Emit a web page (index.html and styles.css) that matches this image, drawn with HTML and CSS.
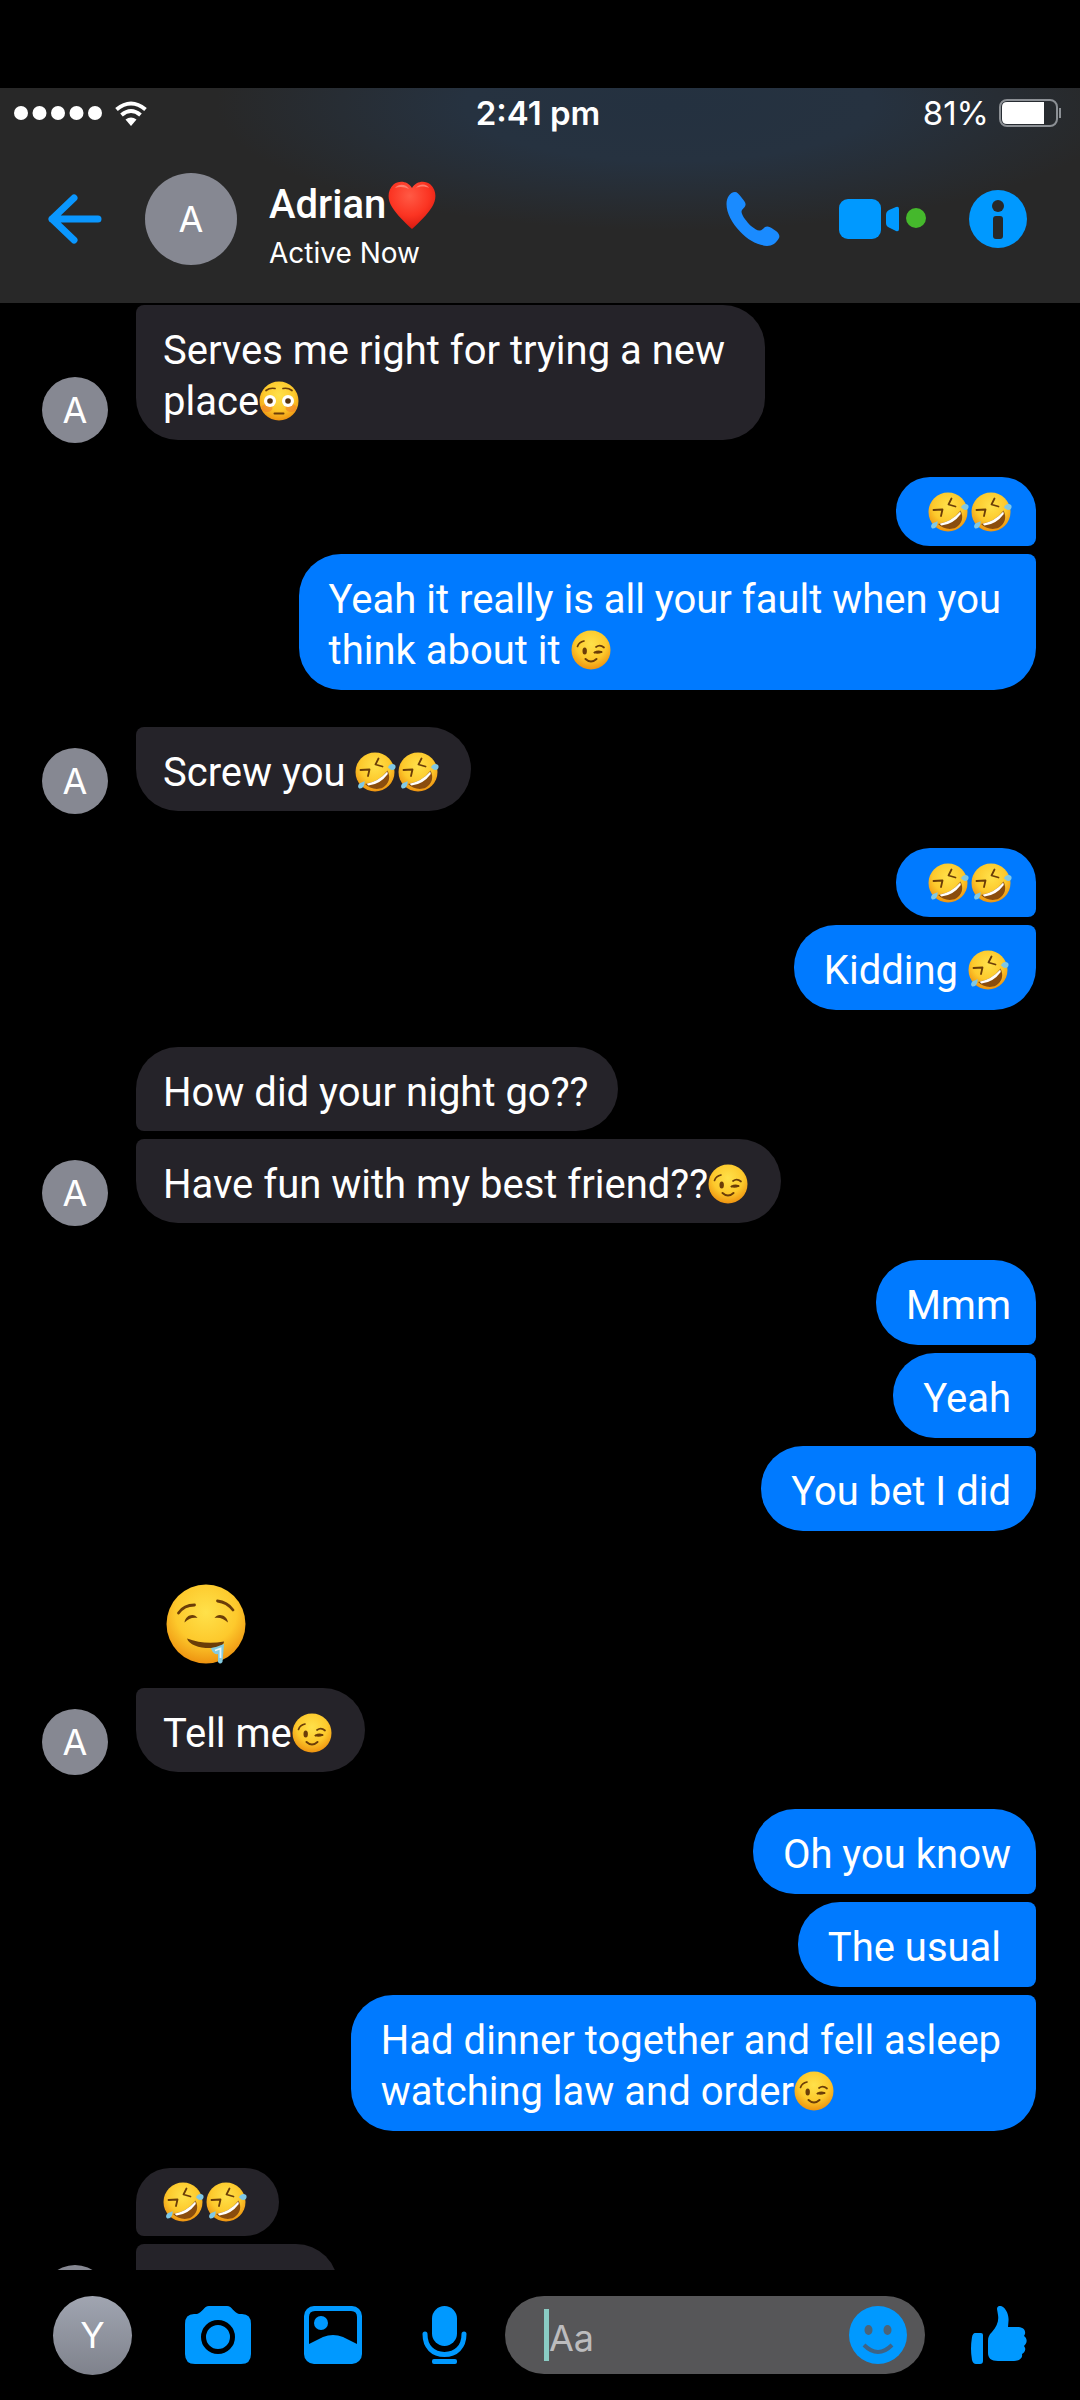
FILE: index.html
```html
<!DOCTYPE html>
<html lang="en">
<head>
    <meta charset="UTF-8">
    <meta name="viewport" content="width=device-width, initial-scale=1.0">
    <title>Adrian</title>
    <link rel="stylesheet" href="styles.css">
</head>
<body>
    <!-- Shared emoji drawings -->
    <svg class="sprites" width="0" height="0" aria-hidden="true">
        <defs>
            <radialGradient id="face" cx="0.5" cy="0.35" r="0.65">
                <stop offset="0" stop-color="#ffe14a"/>
                <stop offset="0.6" stop-color="#fdc92c"/>
                <stop offset="1" stop-color="#ee9310"/>
            </radialGradient>
            <radialGradient id="heartFill" cx="0.45" cy="0.3" r="0.7">
                <stop offset="0" stop-color="#ff5a45"/>
                <stop offset="0.6" stop-color="#fb3422"/>
                <stop offset="1" stop-color="#d81a10"/>
            </radialGradient>
        </defs>
        <symbol id="rofl" viewBox="0 0 43 40">
            <circle cx="20" cy="20" r="19.5" fill="url(#face)"/>
            <g fill="none" stroke="#6b3d08" stroke-width="1.8" stroke-linecap="round" stroke-linejoin="round">
                <path d="M5.5 18 14.5 17.5 13 24"/>
                <path d="M23.5 6.5 20.5 12.5 27.5 14.5"/>
            </g>
            <path d="M10 32Q24 30 32.500 18.500C36 25 34 32 28 35.500C22 38.500 14 36.500 10 32z" fill="#8a4d0e"/>
            <path d="M11.500 31.700Q23.500 29.500 32.300 19.500L32.800 22Q25 32.500 13.500 33.500z" fill="#fff"/>
            <path d="M33 15.500C34 12 38 11 40 13C41.500 15 40 18 37.500 18C35.500 18 34.500 16.500 33 15.500z" fill="#7fc8e6"/>
            <path d="M9.500 29C10 33 8 36.500 5 36.500C3 36.500 2.500 34 4 32C5.500 30.500 7.500 30.500 9.500 29z" fill="#7fc8e6"/>
        </symbol>
        <symbol id="wink" viewBox="0 0 43 40">
            <circle cx="20" cy="20" r="19.5" fill="url(#face)"/>
            <ellipse cx="13.700" cy="21" rx="2.200" ry="3.500" fill="#6b3d08"/>
            <g fill="none" stroke="#6b3d08" stroke-width="1.700" stroke-linecap="round">
                <path d="M6.500 16.500Q8 12 13 11"/>
                <path d="M25 17Q29 14 33 17.500"/>
                <path d="M23.500 22.500Q27 20.500 30.500 22"/>
                <path d="M23.500 22.500Q27 23.500 30.500 22"/>
                <path d="M14.500 29Q20 34 25.500 29" stroke-width="2"/>
            </g>
        </symbol>
        <symbol id="flushed" viewBox="0 0 43 40">
            <circle cx="20" cy="20" r="19.5" fill="url(#face)"/>
            <ellipse cx="8" cy="27" rx="5.500" ry="4" fill="#f0802a" opacity="0.6"/>
            <ellipse cx="32" cy="27" rx="5.500" ry="4" fill="#f0802a" opacity="0.6"/>
            <circle cx="11" cy="20" r="6" fill="#fff"/>
            <circle cx="29" cy="20" r="6" fill="#fff"/>
            <circle cx="11" cy="20" r="2.800" fill="#553311"/>
            <circle cx="29" cy="20" r="2.800" fill="#553311"/>
            <g fill="none" stroke="#6b3d08" stroke-width="1.700" stroke-linecap="round">
                <path d="M7 9.500Q11 6.500 16 7.500"/>
                <path d="M24 7.500Q29 6.500 33 9.500"/>
                <path d="M15.500 32.500H24.500" stroke-width="2"/>
            </g>
        </symbol>
        <symbol id="drool" viewBox="0 0 80 80">
            <circle cx="40" cy="40" r="39.500" fill="url(#face)"/>
            <g fill="none" stroke="#6b3d08" stroke-width="2.800" stroke-linecap="round">
                <path d="M12.500 29Q18 21 28.500 21"/>
                <path d="M51.500 17Q61 18 67 26"/>
            </g>
            <path d="M18.500 38.500C19.500 31 28 28.500 31.500 34C26 33 22.500 35 18.500 38.500z" fill="#6b3d08"/>
            <path d="M48.500 34C52 28.500 61 31 62 38.500C57.500 35 54 33 48.500 34z" fill="#6b3d08"/>
            <path d="M21 54.500Q38 61 58 57.500C58 61 53 64 46 64C34 64.500 23 61 21 54.500z" fill="#6b3d08"/>
            <path d="M45 64Q51 63 58 60L56.500 78Q54 81 52 78L52 70Q47 71 45 64z" fill="#84cbe0"/>
            <path d="M49 66.500 54.500 64.500V74" fill="none" stroke="#e6f7fc" stroke-width="1.800"/>
        </symbol>
        <symbol id="heart" viewBox="0 0 48 48">
            <path d="M24 7C28 0 37-1 42.500 3.500C48.500 9 49 18 44 26C39 34 30.500 42 24 48C17.500 42 9 34 4 26C-1 18-.5 9 5.500 3.500C11-1 20 0 24 7z" fill="url(#heartFill)"/>
            <path d="M7 7C11 2 18 3 21 8C17 6 12 5 7 7zM28 7C32 2 39 3 41 7C37 5 32 5 28 7z" fill="#ff9a8c" opacity="0.7"/>
        </symbol>
    </svg>

    <header class="header">
        <div class="status-bar">
            <div class="signal">
                <svg width="89" height="14" viewBox="0 0 89 14" fill="#fff" role="img" aria-label="Signal">
                    <circle cx="7" cy="7" r="7"/><circle cx="25.500" cy="7" r="7"/><circle cx="44" cy="7" r="7"/><circle cx="62.500" cy="7" r="7"/><circle cx="81" cy="7" r="7"/>
                </svg>
                <svg width="32" height="25" viewBox="0 0 32 25" fill="none" stroke="#fff" stroke-width="4" role="img" aria-label="Wi-Fi">
                    <path d="M1.500 8.500Q16-3.500 30.500 8.500"/>
                    <path d="M6.500 14Q16 6 25.500 14"/>
                    <path d="M10.500 18.500Q16 14.500 21.500 18.500L16 25z" fill="#fff" stroke="none"/>
                </svg>
            </div>
            <time class="clock">2:41 pm</time>
            <div class="battery">
                <span>81%</span>
                <svg width="63" height="28" viewBox="0 0 63 28" role="img" aria-label="Battery">
                    <rect x="1" y="1" width="57" height="26" rx="7" fill="none" stroke="#8c9095" stroke-width="2"/>
                    <path d="M8 3H45V25H8Q3 25 3 20V8Q3 3 8 3z" fill="#fff"/>
                    <path d="M61 9V19" stroke="#8c9095" stroke-width="2"/>
                </svg>
            </div>
        </div>

        <div class="chat-bar">
            <a href="#" class="back" aria-label="Back">
                <svg width="54" height="50" viewBox="0 0 54 50" fill="none" stroke="#0a97ff" stroke-width="7" stroke-linecap="round" stroke-linejoin="round">
                    <path d="M26 4 4 25 26 46M4 25H50"/>
                </svg>
            </a>
            <div class="avatar avatar-large">A</div>
            <div class="contact">
                <h1>Adrian<svg class="heart" role="img" aria-label="❤️"><use href="#heart"/></svg></h1>
                <p>Active Now</p>
            </div>
            <div class="actions">
                <button class="call" aria-label="Call">
                    <svg width="54" height="54" viewBox="0 0 54 54" fill="#1a8bff">
                        <path d="M9 0C11 0 13 2 15.500 5.500C18 8.500 20 11 19.500 13C19 16 15.500 17 15.500 20C16 24 21 30 25 34C29 37 31.500 39 34 38.500C37 38 38 34.500 41.500 34.500C44 34.500 47 37 50 39C53 41.500 54 43.500 53 46C50.500 51 46 54 41 54C31 53 22 48 14 39.500C6 31 .5 21 .5 12C.5 6 4 0 9 0z"/>
                    </svg>
                </button>
                <button aria-label="Video call">
                    <svg width="87" height="40" viewBox="0 0 87 40">
                        <rect width="42" height="40" rx="9" fill="#0099ff"/>
                        <path d="M47 16Q47 12.500 50 11L57 8Q60 7 60 10V30Q60 33 57 32L50 28.500Q47 27 47 24z" fill="#0099ff"/>
                        <circle cx="77" cy="19" r="10" fill="#45b82c"/>
                    </svg>
                </button>
                <button aria-label="Conversation info">
                    <svg width="58" height="58" viewBox="0 0 58 58">
                        <circle cx="29" cy="29" r="29" fill="#0099ff"/>
                        <circle cx="29" cy="16" r="6" fill="#282828"/>
                        <rect x="24" y="26" width="10" height="23" rx="3" fill="#282828"/>
                    </svg>
                </button>
            </div>
        </div>
    </header>

    <main class="messages">
        <section class="group incoming">
            <div class="avatar">A</div>
            <p class="bubble last">Serves me right for trying a new&nbsp;<br>place<svg class="emoji" role="img" aria-label="😳"><use href="#flushed"/></svg></p>
        </section>

        <section class="group outgoing">
            <p class="bubble first emoji-only"><svg class="emoji" role="img" aria-label="🤣"><use href="#rofl"/></svg><svg class="emoji" role="img" aria-label="🤣"><use href="#rofl"/></svg></p>
            <p class="bubble last">Yeah it really is all your fault when you&nbsp;<br>think about it <svg class="emoji" role="img" aria-label="😉"><use href="#wink"/></svg></p>
        </section>

        <section class="group incoming">
            <div class="avatar">A</div>
            <p class="bubble last">Screw you <svg class="emoji" role="img" aria-label="🤣"><use href="#rofl"/></svg><svg class="emoji" role="img" aria-label="🤣"><use href="#rofl"/></svg></p>
        </section>

        <section class="group outgoing">
            <p class="bubble first emoji-only"><svg class="emoji" role="img" aria-label="🤣"><use href="#rofl"/></svg><svg class="emoji" role="img" aria-label="🤣"><use href="#rofl"/></svg></p>
            <p class="bubble last">Kidding <svg class="emoji" role="img" aria-label="🤣"><use href="#rofl"/></svg></p>
        </section>

        <section class="group incoming">
            <div class="avatar">A</div>
            <p class="bubble first">How did your night go??</p>
            <p class="bubble last">Have fun with my best friend??<svg class="emoji" role="img" aria-label="😉"><use href="#wink"/></svg></p>
        </section>

        <section class="group outgoing">
            <p class="bubble first">Mmm</p>
            <p class="bubble middle">Yeah</p>
            <p class="bubble last">You bet I did</p>
        </section>

        <section class="group incoming">
            <div class="avatar">A</div>
            <p class="big-emoji"><svg width="80" height="80" role="img" aria-label="🤤"><use href="#drool"/></svg></p>
            <p class="bubble last">Tell me<svg class="emoji" role="img" aria-label="😉"><use href="#wink"/></svg></p>
        </section>

        <section class="group outgoing">
            <p class="bubble first">Oh you know</p>
            <p class="bubble middle">The usual&nbsp;</p>
            <p class="bubble last">Had dinner together and fell asleep&nbsp;<br>watching law and order<svg class="emoji" role="img" aria-label="😉"><use href="#wink"/></svg></p>
        </section>

        <section class="group incoming">
            <div class="avatar"></div>
            <p class="bubble first emoji-only"><svg class="emoji" role="img" aria-label="🤣"><use href="#rofl"/></svg><svg class="emoji" role="img" aria-label="🤣"><use href="#rofl"/></svg></p>
            <p class="bubble last cut-off"></p>
        </section>
    </main>

    <footer class="composer">
        <div class="tools">
            <div class="avatar avatar-me">Y</div>
            <button aria-label="Camera">
                <svg width="66" height="58" viewBox="0 0 66 58">
                    <path d="M24 0H42C47 0 49 7 54 8H57Q66 8 66 18V48Q66 58 56 58H10Q0 58 0 48V18Q0 8 9 8H12C17 7 19 0 24 0z" fill="#0099ff"/>
                    <circle cx="33" cy="31" r="14.500" fill="#0099ff" stroke="#000" stroke-width="5"/>
                </svg>
            </button>
            <button aria-label="Photos">
                <svg width="58" height="58" viewBox="0 0 58 58">
                    <rect width="58" height="58" rx="10" fill="#0099ff"/>
                    <path d="M11 5H47Q53 5 53 11V38L39 31Q29 27 19 31L5 38V11Q5 5 11 5z" fill="#000"/>
                    <circle cx="17" cy="17" r="7" fill="#0099ff"/>
                </svg>
            </button>
            <button aria-label="Voice message">
                <svg width="58" height="58" viewBox="0 0 58 58">
                    <rect x="17" width="25" height="40" rx="12.500" fill="#0099ff"/>
                    <path d="M10 28C10 41 18 48.500 29.500 48.500C41 48.500 49 41 49 28" fill="none" stroke="#0099ff" stroke-width="5" stroke-linecap="round"/>
                    <rect x="17" y="53" width="25" height="5" rx="2" fill="#0099ff"/>
                </svg>
            </button>
        </div>
        <div class="field">
            <span class="caret"></span>
            <input type="text" placeholder="Aa" aria-label="Message">
            <button aria-label="Stickers">
                <svg width="58" height="58" viewBox="0 0 58 58">
                    <circle cx="29" cy="29" r="29" fill="#0099ff"/>
                    <ellipse cx="19.500" cy="24" rx="4" ry="5" fill="#4c6478"/>
                    <ellipse cx="38.500" cy="24" rx="4" ry="5" fill="#4c6478"/>
                    <path d="M15 39Q29 53 43 39" fill="none" stroke="#3f6385" stroke-width="4"/>
                </svg>
            </button>
        </div>
        <button aria-label="Like">
            <svg width="56" height="58" viewBox="0 0 56 58" fill="#0099ff">
                <path d="M4 27H10Q12 27 12 29V55Q12 58 9 58H5Q2 58 1 54Q-1 43 1 31Q2 27 4 27z"/>
                <path d="M26 3C26 0 29-1 32 1C36 4 38 10 37.500 15L37 21H46C51 21 55 23 54 28L53 30C57 33 56 37 53 40C56 44 53 47 51 48C52 53 47 55 43 55H27C20 55 17 52 17 47V35C17 31 18 29 21 26C26 20 28 15 27 9z"/>
            </svg>
        </button>
    </footer>
</body>
</html>
```

FILE: styles.css
```css
* {
    box-sizing: border-box;
}
body {
    margin: 0;
    height: 100vh;
    padding-top: 88px;
    display: flex;
    flex-direction: column;
    overflow: hidden;
    background-color: #000;
    color: #fff;
    font-family: Inter, "Liberation Sans", sans-serif;
    font-size: 40px;
}
h1,
p {
    margin: 0;
}
svg {
    display: block;
}
button {
    padding: 0;
    border: none;
    background: none;
    cursor: pointer;
}
.sprites {
    position: absolute;
}
.header {
    flex: none;
    height: 215px;
    background: radial-gradient(ellipse 42% 58% at 62% 8%, #243140 0%, #263240 45%, #282828 100%) #282828;
}
.status-bar {
    display: grid;
    grid-template-columns: 1fr auto 1fr;
    align-items: center;
    height: 50px;
    padding: 0 18px 0 14px;
    font-size: 33px;
}
.signal {
    display: flex;
    align-items: center;
    gap: 12px;
}
.clock {
    font-weight: 600;
}
.battery {
    display: flex;
    align-items: center;
    justify-content: flex-end;
    gap: 10px;
}
.chat-bar {
    display: flex;
    align-items: center;
    height: 162px;
    padding: 0 53px 0 48px;
}
.avatar {
    display: flex;
    align-items: center;
    justify-content: center;
    flex: none;
    width: 66px;
    height: 66px;
    border-radius: 50%;
    background-color: #868892;
    font-size: 36px;
}
.avatar-large {
    width: 92px;
    height: 92px;
    margin: 0 32px 0 43px;
}
.avatar-me {
    width: 79px;
    height: 79px;
    background: linear-gradient(#a0a5b1, #7f828c);
}
.contact {
    padding-top: 12px;
}
.contact h1 {
    display: flex;
    align-items: center;
    gap: 2px;
    font-family: Roboto, "Liberation Sans", sans-serif;
    font-size: 40px;
    font-weight: 500;
    line-height: 50px;
}
.contact p {
    margin-top: 6px;
    font-size: 28px;
    line-height: 34px;
}
.heart {
    width: 48px;
    height: 48px;
}
.actions {
    display: flex;
    align-items: center;
    gap: 43px;
    margin-left: auto;
}
.call {
    margin-right: 16px;
}

/* Conversation */
.messages {
    flex: 1;
    min-height: 0;
    overflow: hidden;
    display: flex;
    flex-direction: column;
    gap: 37px;
    padding: 2px 44px 0 42px;
}
.group {
    flex: none;
    display: grid;
    gap: 8px 28px;
}
.incoming {
    grid-template-columns: 66px 1fr;
    justify-items: start;
}
.incoming .avatar {
    grid-column: 1;
    grid-row: 1;
    align-self: end;
    margin-bottom: -3px;
}
.incoming .avatar:has(~ .first),
.incoming .avatar:has(~ .big-emoji) {
    grid-row: 2;
}
.incoming p {
    grid-column: 2;
}
.outgoing {
    justify-items: end;
}
.bubble {
    border-radius: 42px;
    font-family: Roboto, "Liberation Sans", sans-serif;
    line-height: 51px;
}
.incoming .bubble {
    padding: 20px 30px 13px 27px;
    background-color: #252329;
}
.outgoing .bubble {
    padding: 20px 25px 14px 30px;
    background-color: #007aff;
}
.incoming .first,
.incoming .middle {
    border-bottom-left-radius: 8px;
}
.incoming .last,
.incoming .middle {
    border-top-left-radius: 8px;
}
.outgoing .first,
.outgoing .middle {
    border-bottom-right-radius: 8px;
}
.outgoing .last,
.outgoing .middle {
    border-top-right-radius: 8px;
}
.bubble.emoji-only {
    display: flex;
    align-items: center;
    height: 69px;
    padding-top: 0;
    padding-bottom: 0;
    border-top-left-radius: 34px;
    border-top-right-radius: 34px;
}
.incoming .emoji-only {
    height: 68px;
    border-bottom-right-radius: 34px;
}
.outgoing .emoji-only {
    padding-left: 32px;
    padding-right: 22px;
    border-bottom-left-radius: 34px;
}
.emoji {
    display: inline-block;
    width: 43px;
    height: 40px;
    vertical-align: -6px;
}
.big-emoji {
    padding: 16px 30px;
}
.cut-off {
    width: 202px;
    height: 84px;
}

/* Bottom bar */
.composer {
    flex: none;
    display: flex;
    align-items: center;
    height: 130px;
    padding: 0 53px;
}
.tools {
    display: flex;
    align-items: center;
    gap: 53px;
}
.field {
    flex: 1;
    min-width: 0;
    display: flex;
    align-items: center;
    height: 78px;
    margin: 0 46px 0 32px;
    padding: 0 18px 0 39px;
    border-radius: 39px;
    background-color: #565658;
}
.field input {
    flex: 1;
    min-width: 0;
    height: 60px;
    padding: 6px 0 0;
    border: none;
    outline: none;
    background: none;
    color: #fff;
    font-family: inherit;
    font-size: 36px;
}
.field input::placeholder {
    color: #bcbcbe;
    opacity: 1;
}
.caret {
    width: 5px;
    height: 52px;
    background-color: #8accc4;
}
```
